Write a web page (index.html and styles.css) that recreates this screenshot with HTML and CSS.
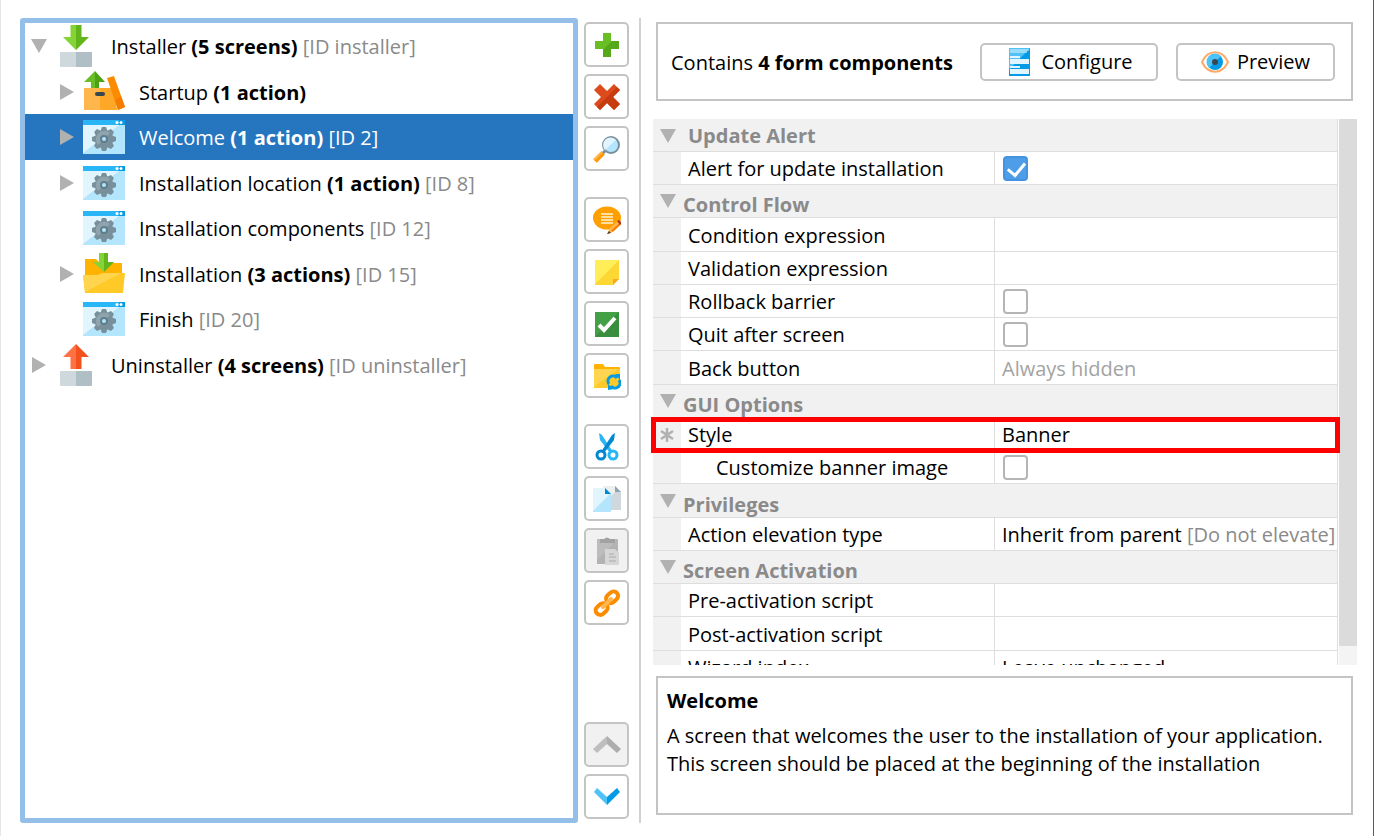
FILE: index.html
```html
<!DOCTYPE html>
<html lang="en">
<head>
  <meta charset="UTF-8">
  <title>Screens &amp; Actions</title>
  <link rel="stylesheet" href="styles.css">
</head>
<body>
  <svg class="sprite" aria-hidden="true">
    <symbol id="down" viewBox="0 0 16 16"><path d="M0 1h16L8 15z" fill="#b1b1b1"/></symbol>
    <symbol id="right" viewBox="0 0 16 16"><path d="M1 0l14 8-14 8z" fill="#b1b1b1"/></symbol>
    <symbol id="installer" viewBox="0 0 42 42">
      <path d="M5 27h16v15H6q-1 0-1-1z" fill="#cfd8dc"/><path d="M21 27h16v14q0 1-1 1H21z" fill="#b0bec5"/>
      <path d="M15.500 0H21v25L8 12h7.500z" fill="#84d438"/><path d="M21 0h5.500v12H34L21 25z" fill="#62b51b"/>
    </symbol>
    <symbol id="uninstaller" viewBox="0 0 42 42">
      <path d="M5 27h16v15H6q-1 0-1-1z" fill="#cfd8dc"/><path d="M21 27h16v14q0 1-1 1H21z" fill="#b0bec5"/>
      <path d="M21 0v25h-5.500V13H8z" fill="#ff7043"/><path d="M21 0v25h5.500V13H34z" fill="#f4511e"/>
    </symbol>
    <symbol id="startup" viewBox="0 0 42 42">
      <path d="M12 0v18H8V11H1z" fill="#6abe25"/><path d="M12 0v18h4V11h6z" fill="#4ea315"/>
      <path d="M1 17h30l3 22H1z" fill="#ffa726"/><path d="M1 17h16v22H1z" fill="#ffb74d"/>
      <rect x="12" y="21" width="10" height="4" rx="2" fill="#37474f"/>
      <path d="M24 7l7-2 11 31-7 3z" fill="#fb8c00"/><path d="M38 25l4 11-7 3-3-10z" fill="#f57c00"/>
    </symbol>
    <symbol id="screen" viewBox="0 0 42 42">
      <path d="M0 4h42v34H0z" fill="#b3e5fc"/><path d="M0 9h36L0 37z" fill="#e1f5fe"/>
      <path d="M0 4h42v5H0z" fill="#29b6f6"/><path d="M36 4h6v5h-6z" fill="#039be5"/>
      <circle cx="34" cy="6.500" r="1.500" fill="#fff"/><circle cx="38" cy="6.500" r="1.500" fill="#fff"/>
      <g fill="#78909c">
        <circle cx="21" cy="23" r="9"/>
        <path id="teeth" d="M17.500 15l1.500-4h4l1.500 4v16L23 35h-4l-1.500-4z"/>
        <use href="#teeth" transform="rotate(45 21 23)"/><use href="#teeth" transform="rotate(90 21 23)"/><use href="#teeth" transform="rotate(135 21 23)"/>
      </g>
      <path d="M15 29a8.500 8.500 0 0 1 12-12z" fill="#90a4ae"/>
      <circle cx="21" cy="23" r="4" fill="#607d8b"/><circle cx="21" cy="23" r="2" fill="#b3e5fc"/>
    </symbol>
    <symbol id="folder" viewBox="0 0 42 42">
      <path d="M2 6h11l4 4h22v14H2z" fill="#ffb300"/>
      <path d="M0 22h15l5-2h22l-2 20H2z" fill="#ffca28"/><path d="M0 22h15l5-2h18L2 39z" fill="#ffd54f"/>
      <path d="M16 0h5v19L10 9h6z" fill="#84d438"/><path d="M21 0h4v9h6L21 19z" fill="#62b51b"/>
    </symbol>
  </svg>

  <div class="app">
    <ul class="tree" role="tree">
      <li class="node" role="treeitem">
        <button class="toggle" aria-label="Collapse"><svg><use href="#down"/></svg></button>
        <svg class="pic"><use href="#installer"/></svg>
        <span>Installer <b>(5 screens)</b> <i>[ID installer]</i></span>
      </li>
      <li class="node child" role="treeitem">
        <button class="toggle" aria-label="Expand"><svg><use href="#right"/></svg></button>
        <svg class="pic"><use href="#startup"/></svg>
        <span>Startup <b>(1 action)</b></span>
      </li>
      <li class="node child selected" role="treeitem">
        <button class="toggle" aria-label="Expand"><svg><use href="#right"/></svg></button>
        <svg class="pic"><use href="#screen"/></svg>
        <span>Welcome <b>(1 action)</b> <i>[ID 2]</i></span>
      </li>
      <li class="node child" role="treeitem">
        <button class="toggle" aria-label="Expand"><svg><use href="#right"/></svg></button>
        <svg class="pic"><use href="#screen"/></svg>
        <span>Installation location <b>(1 action)</b> <i>[ID 8]</i></span>
      </li>
      <li class="node child leaf" role="treeitem">
        <svg class="pic"><use href="#screen"/></svg>
        <span>Installation components <i>[ID 12]</i></span>
      </li>
      <li class="node child" role="treeitem">
        <button class="toggle" aria-label="Expand"><svg><use href="#right"/></svg></button>
        <svg class="pic"><use href="#folder"/></svg>
        <span>Installation <b>(3 actions)</b> <i>[ID 15]</i></span>
      </li>
      <li class="node child leaf" role="treeitem">
        <svg class="pic"><use href="#screen"/></svg>
        <span>Finish <i>[ID 20]</i></span>
      </li>
      <li class="node" role="treeitem">
        <button class="toggle" aria-label="Expand"><svg><use href="#right"/></svg></button>
        <svg class="pic"><use href="#uninstaller"/></svg>
        <span>Uninstaller <b>(4 screens)</b> <i>[ID uninstaller]</i></span>
      </li>
    </ul>

    <div class="toolbar">
      <div class="group">
        <button class="tool" aria-label="Add"><svg viewBox="0 0 28 28"><path d="M10 2h8v8h8v8h-8v8h-8v-8H2v-8h8z" fill="#6abe25"/><path d="M26 10v8h-8v8h-8v-7l9-9z" fill="#56a81b"/></svg></button>
        <button class="tool" aria-label="Delete"><svg viewBox="0 0 28 28"><path d="M7 1l7 7 7-7 6 6-7 7 7 7-6 6-7-7-7 7-6-6 7-7-7-7z" fill="#dd4b1c"/><path d="M27 7l-7 7 7 7-6 6-7-7-7 7-3-3L24 4z" fill="#c63c10"/></svg></button>
        <button class="tool" aria-label="Find"><svg viewBox="0 0 28 28"><path d="M12 16l-3 3" stroke="#78909c" stroke-width="3"/><path d="M10 18l-8 8" stroke="#ff9800" stroke-width="5"/><path d="M9 17l-8 8" stroke="#ffb74d" stroke-width="2"/><circle cx="18" cy="10" r="8" fill="#b3e5fc" stroke="#78909c" stroke-width="2"/><path d="M12 15a7 7 0 0 1 11-10z" fill="#e1f5fe"/></svg></button>
      </div>
      <div class="group">
        <button class="tool" aria-label="Comment"><svg viewBox="0 0 28 28"><ellipse cx="14" cy="12" rx="14" ry="11.500" fill="#ffa000"/><path d="M8 8h12M8 11h12M8 14h12M8 17h12" stroke="#fff3d0" stroke-width="1.500"/><path d="M14 28l3-6 8-7 3 3-8 8z" fill="#ffb74d"/><path d="M19 25l8-7" stroke="#f57c00" stroke-width="2"/><path d="M24 15l2-1 3 3-2 2z" fill="#b5351a"/><path d="M14 28l2-3 2 2z" fill="#4e342e"/></svg></button>
        <button class="tool" aria-label="Note"><svg viewBox="0 0 28 28"><path d="M2 2h24v19l-6 6H2z" fill="#fdd835"/><path d="M2 2h24L2 26z" fill="#ffee58"/><path d="M20 27v-6h6z" fill="#f9a825"/></svg></button>
        <button class="tool" aria-label="Enable"><svg viewBox="0 0 28 28"><path d="M2 2h24v25H2z" fill="#388e3c"/><path d="M2 2h24L2 27z" fill="#43a047"/><path d="M6 15l5 5L22 8" fill="none" stroke="#fff" stroke-width="4"/></svg></button>
        <button class="tool" aria-label="Sync folder"><svg viewBox="0 0 28 28"><path d="M1 3q0-1 1-1h8l2 3h14q1 0 1 1v4H1z" fill="#ffb300"/><path d="M1 7h26v19H1z" fill="#ffca28"/><path d="M1 7h24L1 25z" fill="#ffd54f"/><path d="M16 22a5 5 0 0 1 8-6M26 18a5 5 0 0 1-8 6" fill="none" stroke="#039be5" stroke-width="3"/><path d="M22 12h5v6zM15 28v-6l6 5z" fill="#039be5"/></svg></button>
      </div>
      <div class="group">
        <button class="tool" aria-label="Cut"><svg viewBox="0 0 28 28"><path d="M6 0l3 2 11 17-3 1L7 7z" fill="#29b6f6"/><path d="M22 0l-3 2L8 19l3 1L21 7z" fill="#0288d1"/><circle cx="8" cy="22" r="4" fill="none" stroke="#0288d1" stroke-width="3"/><circle cx="20" cy="22" r="4" fill="none" stroke="#29b6f6" stroke-width="3"/></svg></button>
        <button class="tool" aria-label="Copy"><svg viewBox="0 0 28 28"><path d="M10 1h12l6 6v18H10z" fill="#cfd8dc"/><path d="M10 1h12v6L10 19z" fill="#eceff1"/><path d="M22 1v6h6z" fill="#90a4ae"/><path d="M0 3h12l6 6v18H0z" fill="#b3e5fc"/><path d="M0 3h12l5 6L0 26z" fill="#e1f5fe"/><path d="M12 3v6h6z" fill="#0288d1"/></svg></button>
        <button class="tool" aria-label="Paste" disabled><svg viewBox="0 0 28 28"><path d="M4 2h21v25H4z" fill="#b3b3b3"/><path d="M4 2h21L4 23z" fill="#bcbcbc"/><path d="M7 2h4q3-3 6 0h5v4H7z" fill="#a2a2a2"/><path d="M12 12h10l4 4v12H12z" fill="#d6d6d6"/><path d="M16 17h5M16 20h7M16 24h7" stroke="#aaa"/></svg></button>
        <button class="tool" aria-label="Link"><svg viewBox="0 0 28 28"><rect x="-6" y="-4" width="13" height="9" rx="4.500" transform="translate(8 20) rotate(-42)" fill="none" stroke="#fb8c00" stroke-width="4"/><rect x="-6" y="-5" width="13" height="9" rx="4.500" transform="translate(19 9) rotate(-42)" fill="none" stroke="#fb8c00" stroke-width="4"/><path d="M10 18l8-8" stroke="#ffb74d" stroke-width="4" stroke-linecap="round"/></svg></button>
      </div>
      <div class="group last">
        <button class="tool" aria-label="Move up" disabled><svg viewBox="0 0 28 28"><path d="M14 5v8L4 22l-4-4z" fill="#bebebe"/><path d="M14 5v8l10 9 4-4z" fill="#adadad"/></svg></button>
        <button class="tool" aria-label="Move down"><svg viewBox="0 0 28 28"><path d="M4 5l10 9v8L1 9z" fill="#4fc3f7"/><path d="M24 5l-10 9v8L27 9z" fill="#039be5"/></svg></button>
      </div>
    </div>

    <div class="divider"></div>

    <div class="details">
      <div class="summary">
        <span>Contains <b>4 form components</b></span>
        <button class="wide"><svg viewBox="0 0 28 28"><path d="M4 0h21v28H4z" fill="#039be5"/><path d="M4 0h21L4 22z" fill="#4fc3f7"/><path d="M5 2h19M5 4h17" stroke="#e1f5fe"/><path d="M5 8h10v2H5zM5 18h10v2H5z" fill="#e1f5fe"/><path d="M5 11h19v5H5zM5 21h19v5H5z" fill="#e1f5fe"/></svg>Configure</button>
        <button class="wide preview"><svg viewBox="0 0 28 28"><path d="M1 14C7 1 21 1 27 14 21 27 7 27 1 14z" fill="#fff" stroke="#ffab66" stroke-width="2"/><circle cx="14" cy="14" r="8" fill="#039be5"/><path d="M8 20A8 8 0 0 1 20 8z" fill="#4fc3f7"/><circle cx="14" cy="14" r="3" fill="#37474f"/></svg>Preview</button>
      </div>

      <div class="scroller">
        <div class="view">
          <table class="props">
            <colgroup><col class="c-mark"><col class="c-name"><col></colgroup>
            <tbody>
              <tr class="section first"><th colspan="3"><svg><use href="#down"/></svg>Update Alert</th></tr>
              <tr><td></td><td><label for="alert">Alert for update installation</label></td><td><input type="checkbox" id="alert" checked></td></tr>
              <tr class="section"><th colspan="3"><svg><use href="#down"/></svg>Control Flow</th></tr>
              <tr><td></td><td>Condition expression</td><td></td></tr>
              <tr><td></td><td>Validation expression</td><td></td></tr>
              <tr><td></td><td><label for="rollback">Rollback barrier</label></td><td><input type="checkbox" id="rollback"></td></tr>
              <tr><td></td><td><label for="quit">Quit after screen</label></td><td><input type="checkbox" id="quit"></td></tr>
              <tr><td></td><td>Back button</td><td class="muted">Always hidden</td></tr>
              <tr class="section"><th colspan="3"><svg><use href="#down"/></svg>GUI Options</th></tr>
              <tr class="marked"><td><svg viewBox="0 0 28 28"><path d="M14 8v14M8 11l12 8M20 11L8 19" stroke="#b1b1b1" stroke-width="2.500"/></svg></td><td>Style</td><td>Banner</td></tr>
              <tr><td></td><td class="sub"><label for="custom">Customize banner image</label></td><td><input type="checkbox" id="custom"></td></tr>
              <tr class="section"><th colspan="3"><svg><use href="#down"/></svg>Privileges</th></tr>
              <tr><td></td><td>Action elevation type</td><td>Inherit from parent <i>[Do not elevate]</i></td></tr>
              <tr class="section"><th colspan="3"><svg><use href="#down"/></svg>Screen Activation</th></tr>
              <tr><td></td><td>Pre-activation script</td><td></td></tr>
              <tr><td></td><td>Post-activation script</td><td></td></tr>
              <tr><td></td><td>Wizard index</td><td>Leave unchanged</td></tr>
            </tbody>
          </table>
        </div>
        <div class="scrollbar"><div class="thumb"></div></div>
      </div>

      <div class="help">
        <h2>Welcome</h2>
        <p>A screen that welcomes the user to the installation of your application. This screen should be placed at the beginning of the installation</p>
      </div>
    </div>
  </div>
</body>
</html>
```

FILE: styles.css
```css
* {
  box-sizing: border-box;
}
body {
  margin: 0;
  font-family: "Open Sans", "Noto Sans", sans-serif;
  font-size: 20px;
  line-height: 28px;
  color: #000;
  background: #fff;
}
svg {
  display: block;
  flex: none;
}
i {
  font-style: normal;
  color: #8a8a8a;
}
button {
  font: inherit;
  color: inherit;
  padding: 0;
  cursor: pointer;
}
.sprite {
  position: absolute;
  width: 0;
  height: 0;
}
.app {
  display: flex;
  height: 100vh;
  padding: 18px 16px 13px 19px;
  border-left: 1px solid #e6e6e6;
  border-right: 1px solid #5a5a5a;
  overflow: hidden;
}

/* tree */
.tree {
  flex: 548 1 0;
  min-width: 0;
  margin: 0 6px 0 0;
  padding: 0;
  list-style: none;
  display: grid;
  grid-auto-rows: 46px 45px;
  align-content: start;
  border: 5px solid #93bfe9;
  border-radius: 3px;
  white-space: nowrap;
  overflow: hidden;
}
.node {
  display: flex;
  align-items: center;
  padding-left: 6px;
}
.node span {
  padding-top: 2px;
}
.child {
  padding-left: 34px;
}
.leaf {
  padding-left: 58px;
}
.toggle {
  width: 16px;
  height: 16px;
  margin-right: 8px;
  border: 0;
  background: none;
}
.toggle svg {
  width: 16px;
  height: 16px;
}
.pic {
  width: 42px;
  height: 42px;
  margin-right: 14px;
}
.selected {
  background: #2675bf;
  color: #fff;
}
.selected i {
  color: #fff;
}

/* toolbar */
.toolbar {
  display: flex;
  flex-direction: column;
  gap: 26px;
  width: 45px;
  margin-right: 10px;
  padding: 4px 0;
}
.group {
  display: flex;
  flex-direction: column;
  gap: 7px;
}
.last {
  margin-top: auto;
}
.tool {
  display: flex;
  align-items: center;
  justify-content: center;
  width: 45px;
  height: 45px;
  border: 2px solid #c4c4c4;
  border-radius: 5px;
  background: #fff;
}
.tool:disabled {
  background: #f1f1f1;
}
.tool svg, .wide svg {
  width: 28px;
  height: 28px;
}
.divider {
  width: 2px;
  margin-right: 10px;
  background: #d2d2d2;
}

/* details */
.details {
  flex: 706 1 0;
  min-width: 0;
  display: flex;
  flex-direction: column;
}
.summary {
  display: flex;
  align-items: center;
  margin: 4px 4px 18px 5px;
  height: 79px;
  padding: 0 16px 0 13px;
  border: 2px solid #c4c4c4;
  white-space: nowrap;
}
.summary span {
  padding-top: 2px;
}
.wide {
  display: flex;
  align-items: center;
  justify-content: center;
  gap: 8px;
  width: 178px;
  height: 38px;
  margin-left: auto;
  border: 2px solid #c4c4c4;
  border-radius: 5px;
  background: #fff;
}
.preview {
  width: 159px;
  margin-left: 18px;
}
.scroller {
  flex: 1;
  min-height: 0;
  display: flex;
  align-items: flex-start;
  padding-left: 2px;
  overflow: hidden;
}
.view {
  flex: 1;
  min-width: 0;
}
.props {
  width: 100%;
  table-layout: fixed;
  border-spacing: 0;
  border-right: 1px solid #dedede;
  white-space: nowrap;
}
.c-mark {
  width: 28px;
}
.c-name {
  width: 314px;
}
.props tr {
  height: 33px;
}
.props tr:nth-child(4n) {
  height: 34px;
}
.props td, .props th {
  padding: 2px 0 0 7px;
  border-bottom: 1px solid #dedede;
  text-align: left;
}
.props td:first-child {
  padding: 0;
  background: #f1f1f1;
}
.props td:nth-child(2) {
  border-right: 1px solid #dedede;
}
.props td.sub {
  padding-left: 35px;
}
.props td svg {
  width: 28px;
  height: 28px;
}
.props .section th {
  padding: 8px 0 0 30px;
  line-height: 24px;
  background: #f1f1f1;
  color: #8a8a8a;
}
.props .first th {
  padding: 2px 0 0 35px;
  line-height: 28px;
}
.section svg {
  float: left;
  width: 16px;
  height: 16px;
  margin: 0 0 0 -23px;
}
.first svg {
  margin: 6px 0 0 -28px;
}
.props .muted {
  color: #a3a3a3;
}
/* the frame is placed against the row, not the cell */
.marked {
  position: relative;
}
.marked td:first-child::after {
  content: "";
  position: absolute;
  inset: -1px -3px -2px -2px;
  border: 5px solid #f00;
}
input[type="checkbox"] {
  appearance: none;
  display: block;
  position: relative;
  width: 25px;
  height: 25px;
  margin: 0 0 2px 1px;
  border: 2px solid #b5b5b5;
  border-radius: 4px;
  background: #fff;
}
input[type="checkbox"]:checked {
  border-color: #4592de;
  background: #4d9de8;
}
input[type="checkbox"]:checked::after {
  content: "";
  position: absolute;
  left: 6px;
  top: 1px;
  width: 8px;
  height: 14px;
  border: solid #fff;
  border-width: 0 3px 3px 0;
  transform: rotate(40deg);
}
.scrollbar {
  flex: none;
  align-self: stretch;
  width: 19px;
  padding-left: 1px;
  background: #f4f4f4;
  background-clip: content-box;
}
.thumb {
  height: 527px;
  background: #dbdbdb;
}
.help {
  height: 139px;
  margin: 11px 4px 8px 5px;
  padding: 9px;
  border: 2px solid #c4c4c4;
}
.help h2 {
  margin: 0 0 7px;
  font-size: 20px;
  line-height: 28px;
}
.help p {
  margin: 0;
}
```
